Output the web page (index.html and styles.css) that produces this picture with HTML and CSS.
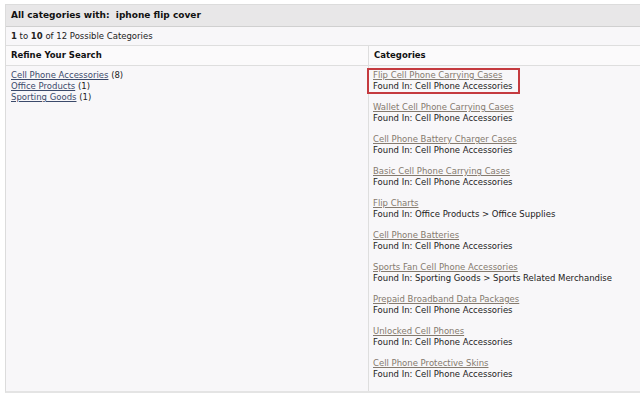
FILE: index.html
```html
<!DOCTYPE html>
<html lang="en">
<head>
  <meta charset="UTF-8">
  <title>All categories with: iphone flip cover</title>
  <link rel="stylesheet" href="styles.css">
</head>
<body>
  <div class="results">
    <div class="results-title">All categories with: &nbsp;iphone flip cover</div>
    <div class="results-count"><b>1</b> to <b>10</b> of 12 Possible Categories</div>

    <div class="results-table">
      <div class="col-head">Refine Your Search</div>
      <div class="col-head col-right">Categories</div>

      <div class="refine">
        <div><a href="#">Cell Phone Accessories</a> (8)</div>
        <div><a href="#">Office Products</a> (1)</div>
        <div><a href="#">Sporting Goods</a> (1)</div>
      </div>

      <div class="categories col-right">
        <div class="cat highlight">
          <a href="#">Flip Cell Phone Carrying Cases</a>
          <span>Found In: Cell Phone Accessories</span>
        </div>
        <div class="cat">
          <a href="#">Wallet Cell Phone Carrying Cases</a>
          <span>Found In: Cell Phone Accessories</span>
        </div>
        <div class="cat">
          <a href="#">Cell Phone Battery Charger Cases</a>
          <span>Found In: Cell Phone Accessories</span>
        </div>
        <div class="cat">
          <a href="#">Basic Cell Phone Carrying Cases</a>
          <span>Found In: Cell Phone Accessories</span>
        </div>
        <div class="cat">
          <a href="#">Flip Charts</a>
          <span>Found In: Office Products &gt; Office Supplies</span>
        </div>
        <div class="cat">
          <a href="#">Cell Phone Batteries</a>
          <span>Found In: Cell Phone Accessories</span>
        </div>
        <div class="cat">
          <a href="#">Sports Fan Cell Phone Accessories</a>
          <span>Found In: Sporting Goods &gt; Sports Related Merchandise</span>
        </div>
        <div class="cat">
          <a href="#">Prepaid Broadband Data Packages</a>
          <span>Found In: Cell Phone Accessories</span>
        </div>
        <div class="cat">
          <a href="#">Unlocked Cell Phones</a>
          <span>Found In: Cell Phone Accessories</span>
        </div>
        <div class="cat">
          <a href="#">Cell Phone Protective Skins</a>
          <span>Found In: Cell Phone Accessories</span>
        </div>
      </div>
    </div>
  </div>
</body>
</html>
```

FILE: styles.css
```css
body {
  margin: 0;
  background: #ffffff;
  font-family: "DejaVu Sans", Verdana, sans-serif;
  font-size: 8.5px;
  line-height: 11px;
  color: #222222;
}

.results {
  margin: 4px 0 0 5px;
  border-left: 1px solid #dcdcdc;
  border-top: 1px solid #dcdcdc;
  border-bottom: 2px solid #e4e4e4;
  background: #f8f7f9;
}

.results-title {
  height: 21px;
  line-height: 21px;
  padding-left: 5px;
  background: #e8e7e8;
  border-bottom: 1px solid #d0d0d0;
  font-weight: bold;
  font-size: 9px;
  color: #111111;
}

.results-count {
  height: 18px;
  line-height: 18px;
  padding-left: 5px;
  border-bottom: 1px solid #dedede;
}

.results-table {
  display: grid;
  grid-template-columns: 362px 1fr;
}

.col-head {
  height: 19px;
  line-height: 19px;
  padding-left: 5px;
  font-weight: bold;
  font-size: 8.5px;
  color: #111111;
  background: #fbfafb;
  border-bottom: 1px solid #dedede;
}

.col-right {
  border-left: 1px solid #dedede;
}

.refine {
  padding: 4px 5px;
}

.refine a {
  color: #3b4a6b;
}

.categories {
  box-sizing: border-box;
  min-height: 325px;
  padding: 4px 4px 10px 4px;
  display: flex;
  flex-direction: column;
  gap: 10px;
}

.cat {
  display: flex;
  flex-direction: column;
  align-items: flex-start;
}

.cat a {
  color: #857a6e;
}

.highlight {
  align-self: flex-start;
  margin: -2px 0 -2px -6px;
  padding: 0 5px 0 4px;
  border: 2px solid #c43a3f;
}
```
